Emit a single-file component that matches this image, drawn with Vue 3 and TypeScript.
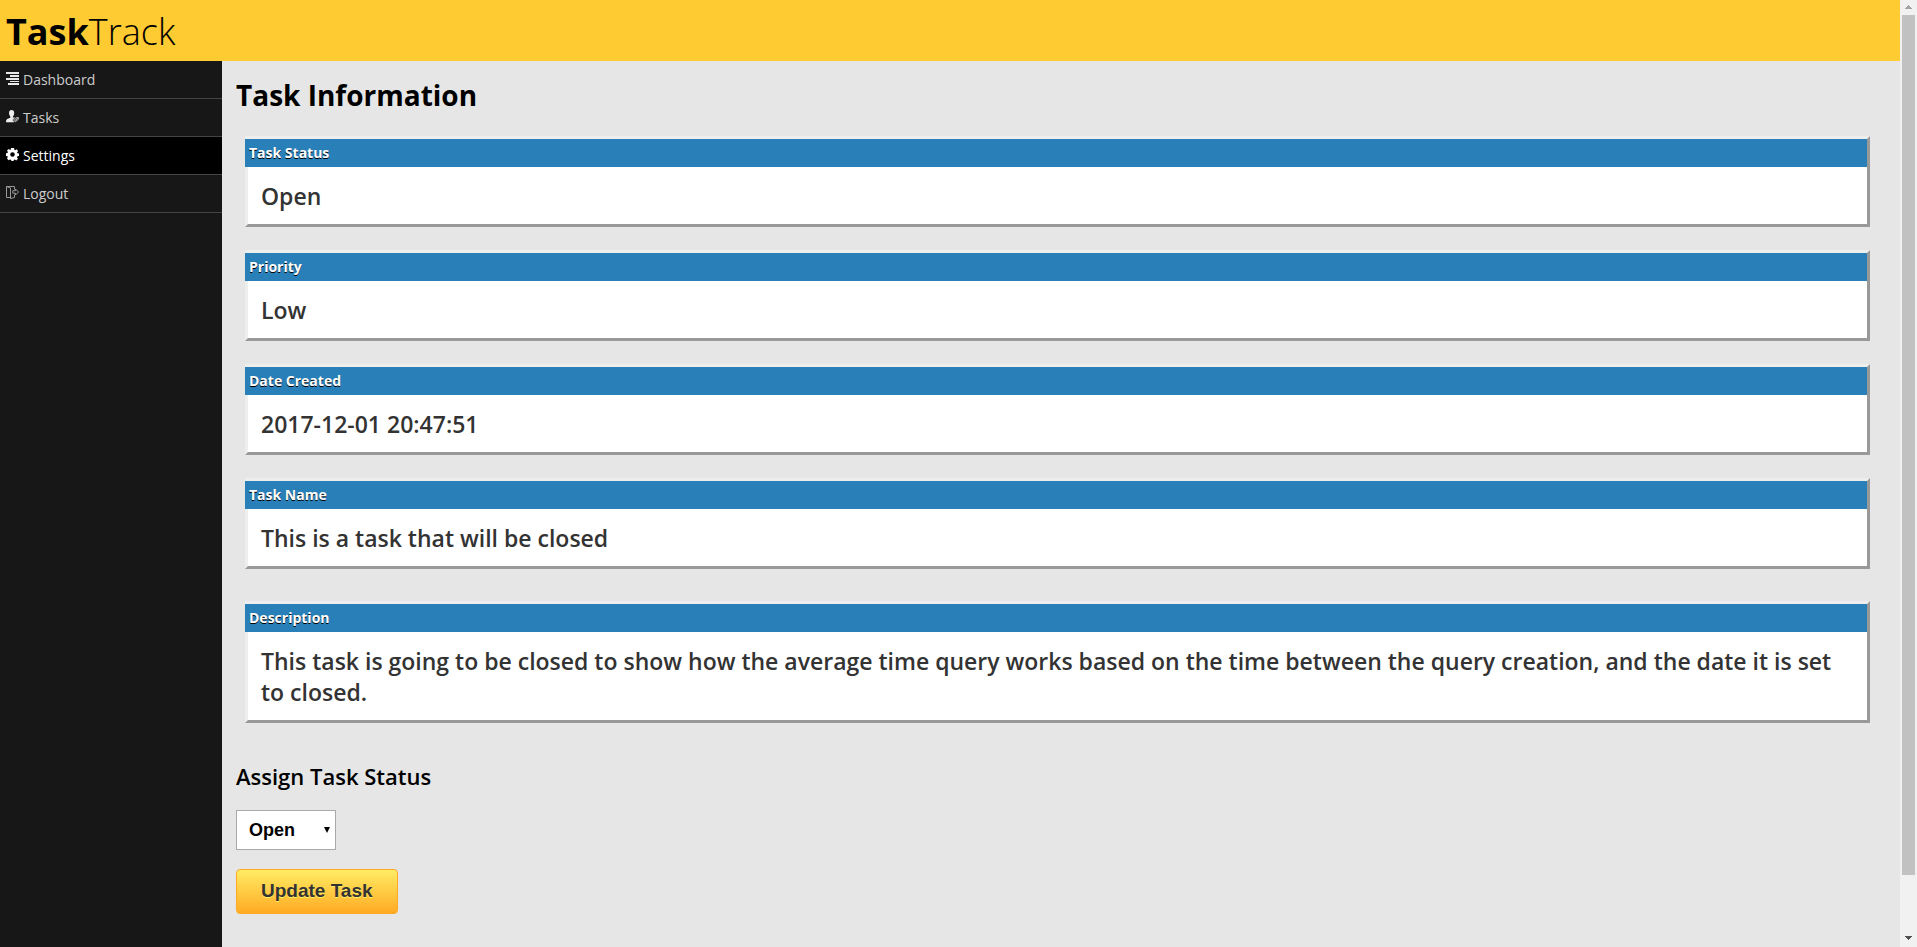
<script setup lang="ts">
import { ref } from 'vue'

interface Panel {
  label: string
  value: string
}

const nav = ['Dashboard', 'Tasks', 'Settings', 'Logout']
const active = 'Settings'
const panels: Panel[] = [
  { label: 'Task Status', value: 'Open' },
  { label: 'Priority', value: 'Low' },
  { label: 'Date Created', value: '2017-12-01 20:47:51' },
  { label: 'Task Name', value: 'This is a task that will be closed' },
  {
    label: 'Description',
    value:
      'This task is going to be closed to show how the average time query works based on the time between the query creation, and the date it is set to closed.',
  },
]
const status = ref('Open')
</script>

<template>
  <div class="window">
    <div class="page">
      <header class="topbar">
        <a class="logo" href="#"><b>Task</b>Track</a>
      </header>
      <div class="body">
        <nav class="sidebar">
          <a v-for="item in nav" :key="item" href="#" class="nav-item" :class="{ active: item === active }">
            <svg class="icon" viewBox="0 0 13 13" aria-hidden="true">
              <g v-if="item === 'Dashboard'" fill="#e8e8e8">
                <path d="M0 0h13v2H0zM4 3h9v2H4zM0 6h13v2H0zM4 9h9v1H4zM2 11h11v2H2z" />
              </g>
              <g v-else-if="item === 'Tasks'">
                <path fill="#eee" d="M5.6 0C3.900 0 3 1.200 3 3c0 1.500.6 2.800 1.300 3.500v1.200L1.200 9C.4 9.500 0 10.500 0 12.200h8.300L6.500 10l1.700-2-1.300-.4V6.500C7.700 5.800 8.200 4.500 8.200 3c0-1.800-.9-3-2.600-3z" />
                <path fill="none" stroke="#ccc" stroke-width="1" d="M9.300 11.800 7 9.300c-.2-1.500 1.300-2 2.300-.8 1.200-1.600 3.500-.9 3.100.8zM8.300 9.200l1.300 1.100L12.500 7" />
              </g>
              <g v-else-if="item === 'Settings'">
                <path fill="#fff" fill-rule="evenodd" d="M5 0h3l.4 1.800.8.4L10.800 1.200 12 3l-.9 1.400.3.8L13 5.500v2.400l-1.600.4-.4.9.9 1.500-1.700 1.700-1.500-.9-.8.3L7.500 13h-2l-.5-1.300-.9-.3-1.500.9L1 10.600l.8-1.500-.3-.8L0 7.900V5.200l1.500-.3.4-.9L1 2.600 2.700 1l1.400.9.6-.3zM6.500 4.200a2.300 2.300 0 1 0 0 4.600 2.300 2.300 0 0 0 0-4.600z" />
              </g>
              <g v-else fill="none" stroke="#999" stroke-width="1">
                <path d="M.5.5h8v3M.5.5v11h4M.5.5l4 1.500v10.500M4.500 12.500l4-1V8.500" />
                <path d="M6.800 4.700h2.700V3l3 3-3 3V7.200H6.800z" />
              </g>
            </svg>
            <span>{{ item }}</span>
          </a>
        </nav>
        <main class="content">
          <h1>Task Information</h1>
          <section v-for="p in panels" :key="p.label" class="panel">
            <h2>{{ p.label }}</h2>
            <p>{{ p.value }}</p>
          </section>
          <form @submit.prevent>
            <label class="form-title" for="status">Assign Task Status</label>
            <div class="select-box">
              <select id="status" v-model="status">
                <option>Open</option>
                <option>Closed</option>
              </select>
              <svg class="caret" viewBox="0 0 6 6" aria-hidden="true"><path d="M0 0h6L3 6z" /></svg>
            </div>
            <button type="submit">Update Task</button>
          </form>
        </main>
      </div>
    </div>
    <div class="scrollbar" aria-hidden="true">
      <svg viewBox="0 0 7 4"><path fill="#a3a3a3" d="M3 0h1v1h1v1h1v1h1v1H0V3h1V2h1V1h1z" /></svg>
      <div class="track"><div class="thumb"></div></div>
      <svg viewBox="0 0 7 4"><path fill="#505050" d="M0 0h7v1H6v1H5v1H4v1H3V3H2V2H1V1H0z" /></svg>
    </div>
  </div>
</template>

<style>
body {
  margin: 0;
}
</style>

<style scoped>
.window {
  display: flex;
  min-height: 100vh;
  font-family: 'Open Sans', sans-serif;
  background: #e6e6e6;
}
.page {
  flex: 1;
  min-width: 0;
  display: flex;
  flex-direction: column;
}
.topbar {
  height: 61px;
  padding: 0 6px;
  background: #ffcb32;
}
.logo {
  font-size: 36px;
  line-height: 64px;
  font-weight: 300;
  color: #000;
  text-decoration: none;
}
.logo b {
  font-weight: 700;
}
.body {
  flex: 1;
  display: flex;
}
.sidebar {
  width: 222px;
  flex: none;
  background: #171717;
}
.nav-item {
  display: flex;
  gap: 4px;
  height: 37px;
  padding: 0 6px;
  border-bottom: 1px solid #444;
  font-size: 14px;
  line-height: 38px;
  color: #ccc;
  text-decoration: none;
}
.nav-item.active {
  background: #000;
  color: #fff;
}
.icon {
  width: 13px;
  height: 13px;
  margin-top: 11px;
}
.content {
  flex: 1;
  min-width: 0;
  padding: 14px 30px 0 14px;
}
h1 {
  margin: 0 0 20px;
  font-size: 28px;
  line-height: 41px;
  font-weight: 700;
  color: #000;
}
.panel {
  margin: 0 0 23px 9px;
  border: 3px solid;
  border-color: #eee #999 #999 #eee;
  background: #fff;
}
.panel:nth-of-type(5) {
  margin-top: 32px;
}
.panel h2 {
  margin: 0 0 0 -3px;
  padding: 0 4px;
  font-size: 14px;
  line-height: 28px;
  font-weight: 700;
  color: #fff;
  background: #2980b9;
  text-shadow: 0 1px 0 #000;
}
.panel p {
  margin: 0;
  padding: 14px 13px 12px;
  font-size: 23px;
  line-height: 31px;
  font-weight: 600;
  color: #333;
}
.form-title {
  display: block;
  margin-top: 38px;
  font-size: 22px;
  line-height: 30px;
  font-weight: 600;
  color: #000;
}
.select-box {
  position: relative;
  width: 100px;
  margin: 19px 0;
}
select {
  display: block;
  appearance: none;
  width: 100%;
  height: 40px;
  padding: 0 12px;
  border: 1px solid #a9a9a9;
  border-radius: 0;
  background: #fff;
  color: #000;
  font: bold 18px 'Liberation Sans', Arial, sans-serif;
}
.caret {
  position: absolute;
  right: 6px;
  top: 17px;
  width: 6px;
  height: 6px;
  pointer-events: none;
}
button {
  display: block;
  height: 45px;
  padding: 0 24px 2px;
  border: 1px solid #ffaa22;
  border-radius: 4px;
  background: linear-gradient(#ffec64, #ffab23);
  color: #333;
  text-shadow: 0 1px 0 #ffee66;
  font: bold 19px 'Liberation Sans', Arial, sans-serif;
}
.scrollbar {
  width: 17px;
  flex: none;
  display: flex;
  flex-direction: column;
  align-items: center;
  padding: 5px 0 7px;
  box-sizing: border-box;
  background: #f1f1f1;
}
.scrollbar svg {
  width: 7px;
  height: 4px;
}
.track {
  flex: 1;
  margin: 6px 0;
}
.thumb {
  width: 13px;
  height: 94%;
  background: #c1c1c1;
}
</style>
